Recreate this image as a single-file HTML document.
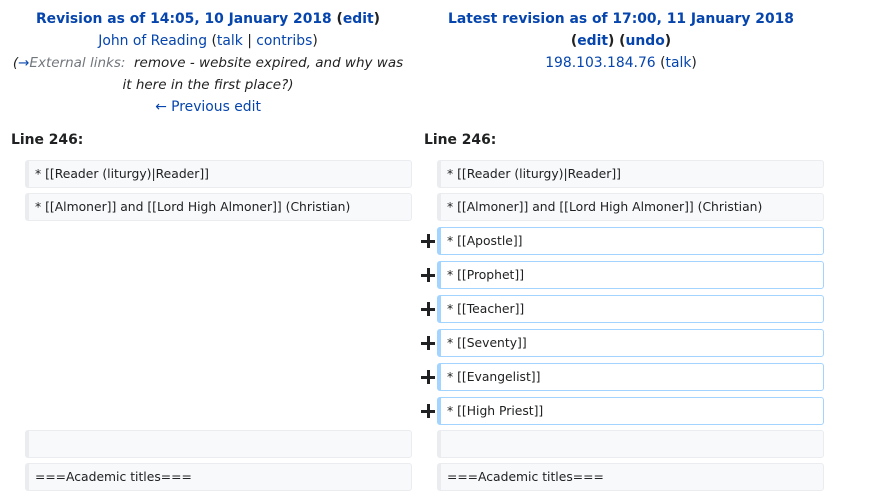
<!DOCTYPE html>
<html><head><meta charset="utf-8"><style>
body{margin:0;width:874px;height:496px;background:#fff;font-family:"DejaVu Sans","Liberation Sans",sans-serif;color:#202122;position:relative;overflow:hidden}
a{color:#0645ad;text-decoration:none}
.hd{position:absolute;top:8px;width:400px;text-align:center;font-size:13.9px;line-height:22px;white-space:nowrap}
.hd b a,.hd b{font-weight:bold}
.cm{color:#222;font-style:italic;font-size:13.5px}
.cm .g{color:#72777d}
.ln{position:absolute;top:132px;font-weight:bold;font-size:13.9px}
.bx{position:absolute;width:376px;height:26px;border:1px solid #eaecf0;border-left:4px solid #eaecf0;border-radius:3px;background:#f8f9fa;font-size:12.35px;line-height:26px;padding-left:6px;box-sizing:content-box;white-space:nowrap}
.bx.add{background:#fff;border-color:#a3d3ff}
.plus{position:absolute;left:421px;width:14px;height:14px}
.plus:before{content:"";position:absolute;left:0;top:6px;width:14px;height:2.5px;background:#202122}
.plus:after{content:"";position:absolute;left:6px;top:0;width:2.5px;height:14px;background:#202122}
</style></head><body>
<div class="hd" style="left:8px"><b><a>Revision as of 14:05, 10 January 2018</a> (<a>edit</a>)</b><br><a>John of Reading</a> (<a>talk</a> | <a>contribs</a>)<br><span class="cm">(<a>→</a><span class="g">External links: </span>&nbsp;remove - website expired, and why was<br>it here in the first place?)</span><br><a>← Previous edit</a></div>
<div class="hd" style="left:421px"><b><a>Latest revision as of 17:00, 11 January 2018</a><br>(<a>edit</a>) (<a>undo</a>)</b><br><a>198.103.184.76</a> (<a>talk</a>)</div>
<div class="ln" style="left:11px">Line 246:</div>
<div class="ln" style="left:424px">Line 246:</div>
<div class="bx" style="left:25px;top:160px">* [[Reader (liturgy)|Reader]]</div>
<div class="bx" style="left:25px;top:193px">* [[Almoner]] and [[Lord High Almoner]] (Christian)</div>
<div class="bx" style="left:25px;top:430px"></div>
<div class="bx" style="left:25px;top:463px">===Academic titles===</div>
<div class="bx" style="left:437px;top:160px">* [[Reader (liturgy)|Reader]]</div>
<div class="bx" style="left:437px;top:193px">* [[Almoner]] and [[Lord High Almoner]] (Christian)</div>
<div class="plus" style="top:234px"></div><div class="bx add" style="left:437px;top:227px">* [[Apostle]]</div>
<div class="plus" style="top:268px"></div><div class="bx add" style="left:437px;top:261px">* [[Prophet]]</div>
<div class="plus" style="top:302px"></div><div class="bx add" style="left:437px;top:295px">* [[Teacher]]</div>
<div class="plus" style="top:336px"></div><div class="bx add" style="left:437px;top:329px">* [[Seventy]]</div>
<div class="plus" style="top:370px"></div><div class="bx add" style="left:437px;top:363px">* [[Evangelist]]</div>
<div class="plus" style="top:404px"></div><div class="bx add" style="left:437px;top:397px">* [[High Priest]]</div>
<div class="bx" style="left:437px;top:430px"></div>
<div class="bx" style="left:437px;top:463px">===Academic titles===</div>
</body></html>
